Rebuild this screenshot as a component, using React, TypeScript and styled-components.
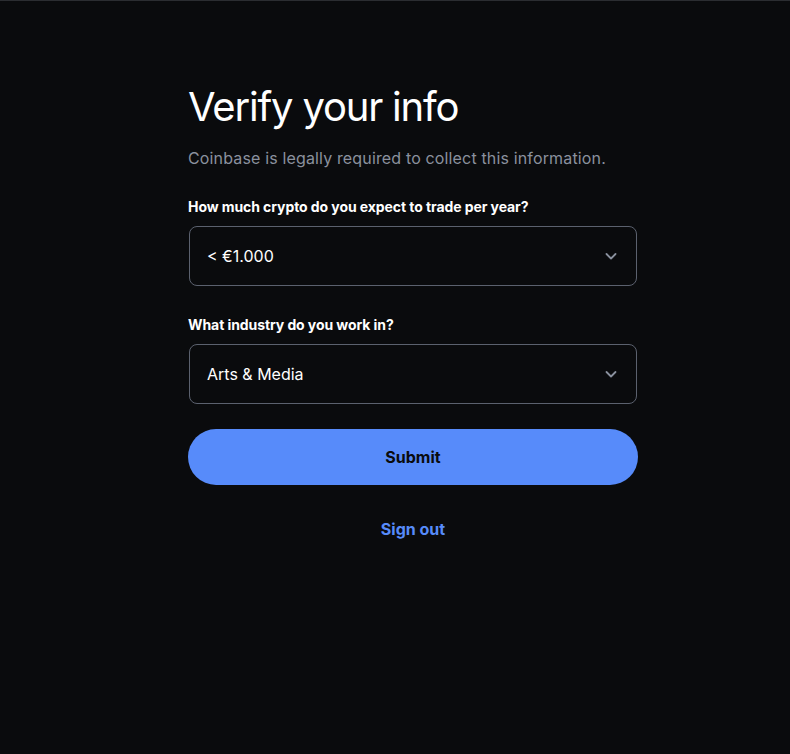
import styled, { createGlobalStyle } from "styled-components";

const GlobalStyle = createGlobalStyle`
  html, body {
    margin: 0;
    padding: 0;
    background: #0a0b0d;
  }
  body {
    font-family: Inter, "Noto Sans", sans-serif;
    color: #ffffff;
  }
`;

const Page = styled.div`
  min-height: 754px;
  border-top: 1px solid #2b2d31;
  box-sizing: border-box;
  display: flex;
  justify-content: flex-start;
  padding-left: 188px;
`;

const Column = styled.div`
  width: 450px;
  display: flex;
  flex-direction: column;
  padding-top: 82px;
`;

const Title = styled.h1`
  margin: 0;
  font-size: 40px;
  line-height: 48px;
  font-weight: 400;
  letter-spacing: -1.2px;
`;

const Subtitle = styled.p`
  margin: 15px 0 0;
  font-size: 16px;
  line-height: 24px;
  color: #8a919e;
  letter-spacing: 0.15px;
`;

const Label = styled.label<{ $gap: number }>`
  display: block;
  margin-top: ${(p) => p.$gap}px;
  font-size: 14px;
  line-height: 20px;
  font-weight: 700;
  letter-spacing: -0.08px;
`;

const Select = styled.div`
  margin: 9px 1px 0;
  height: 60px;
  box-sizing: border-box;
  border: 1px solid #5b616e;
  border-radius: 8px;
  display: flex;
  align-items: center;
  justify-content: space-between;
  padding: 0 18px 0 17px;
  font-size: 16px;
  color: #ffffff;
`;

const Chevron = styled.svg`
  width: 14px;
  height: 14px;
  color: #8a919e;
`;

const SubmitButton = styled.button`
  margin-top: 25px;
  height: 56px;
  border: none;
  border-radius: 28px;
  background: #578bfa;
  color: #0a0b0d;
  font-family: inherit;
  font-size: 16px;
  font-weight: 700;
  cursor: pointer;
`;

const SignOut = styled.a`
  margin-top: 32px;
  align-self: center;
  color: #578bfa;
  font-size: 16px;
  line-height: 24px;
  font-weight: 700;
  text-decoration: none;
  cursor: pointer;
`;

const ChevronDown = () => (
  <Chevron viewBox="0 0 14 14" fill="none">
    <path d="M2.5 5 L7 9.5 L11.5 5" stroke="currentColor" strokeWidth="1.8" strokeLinecap="round" strokeLinejoin="round" />
  </Chevron>
);

const App = () => {
  return (
    <>
      <GlobalStyle />
      <Page>
        <Column>
          <Title>Verify your info</Title>
          <Subtitle>Coinbase is legally required to collect this information.</Subtitle>
          <Label $gap={27}>How much crypto do you expect to trade per year?</Label>
          <Select>
            <span>&lt; €1.000</span>
            <ChevronDown />
          </Select>
          <Label $gap={29}>What industry do you work in?</Label>
          <Select>
            <span>Arts &amp; Media</span>
            <ChevronDown />
          </Select>
          <SubmitButton>Submit</SubmitButton>
          <SignOut>Sign out</SignOut>
        </Column>
      </Page>
    </>
  );
};

export default App;
